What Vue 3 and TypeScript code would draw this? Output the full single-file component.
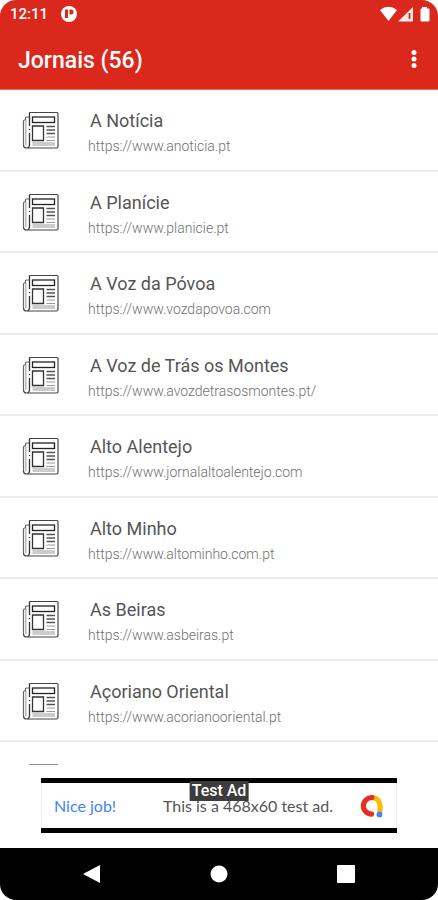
<script setup lang="ts">
interface Newspaper {
  name: string
  url: string
}

const total = 56

const newspapers: Newspaper[] = [
  { name: 'A Notícia', url: 'https://www.anoticia.pt' },
  { name: 'A Planície', url: 'https://www.planicie.pt' },
  { name: 'A Voz da Póvoa', url: 'https://www.vozdapovoa.com' },
  { name: 'A Voz de Trás os Montes', url: 'https://www.avozdetrasosmontes.pt/' },
  { name: 'Alto Alentejo', url: 'https://www.jornalaltoalentejo.com' },
  { name: 'Alto Minho', url: 'https://www.altominho.com.pt' },
  { name: 'As Beiras', url: 'https://www.asbeiras.pt' },
  { name: 'Açoriano Oriental', url: 'https://www.acorianooriental.pt' },
]
</script>

<template>
  <div class="screen">
    <header class="top">
      <div class="status">
        <span class="clock">12:11</span>
        <svg class="badge" viewBox="0 0 16 16" aria-hidden="true">
          <circle cx="8" cy="8" r="8" fill="#fff" />
          <path d="M4 3.500h3v8.500H4z" fill="#da291c" />
          <path d="M8.500 3.500h1.500a2.400 2.400 0 0 1 0 5H8.500z" fill="#da291c" />
        </svg>
        <svg class="signals" viewBox="0 0 50 16" aria-hidden="true">
          <path d="M0 4Q8.500-2.500 17 4L8.500 15z" fill="#fff" />
          <path d="M33 1v14.500H18z" fill="#fff" fill-opacity=".9" />
          <path d="M29.500 7v6" stroke="#da291c" stroke-width="1.800" />
          <path d="M42 1h5v1.500h1.500a1 1 0 0 1 1 1V14.500a1 1 0 0 1-1 1h-7a1 1 0 0 1-1-1V3.500a1 1 0 0 1 1-1H42z" fill="#fff" />
        </svg>
      </div>
      <div class="toolbar">
        <h1>Jornais ({{ total }})</h1>
        <button class="more" type="button" aria-label="Mais opções">
          <svg viewBox="0 0 6 20" aria-hidden="true">
            <circle cx="3" cy="3.500" r="2.500" /><circle cx="3" cy="10" r="2.500" /><circle cx="3" cy="16.500" r="2.500" />
          </svg>
        </button>
      </div>
    </header>

    <svg class="defs" aria-hidden="true">
      <symbol id="newspaper" viewBox="0 0 38 40">
        <path d="M7.500 2.500h27.500q1 0 1 1v33q0 1.500-1.500 1.500H4.500Q1.500 38 1.500 35" fill="none" stroke="#444" stroke-width="1.200" />
        <path d="M1.500 35V11q0-1 1-1h1V8q0-1 1-1h3" fill="none" stroke="#666" stroke-width="1.200" />
        <path d="M3.800 10v25" stroke="#b5b5b5" stroke-width="1.400" />
        <path d="M7.500 2.500V16M7.500 19v1M7.500 23v12q0 2-2 3" fill="none" stroke="#333" stroke-width="1.300" />
        <rect x="10.500" y="7" width="22" height="5.500" fill="none" stroke="#222" stroke-width="1.300" />
        <path d="M10.500 30.500V16h11v14.500z" fill="none" stroke="#333" stroke-width="1.300" />
        <path d="M24.500 16.500h8.500M24.500 20h8.500M24.500 23.500h8.500" stroke="#555" stroke-width="1.300" />
        <path d="M24.500 27h8.500M24.500 30.500h8.500M10.500 33h22.500M10.500 35h22.500" stroke="#999" stroke-width="1.200" />
      </symbol>
    </svg>

    <main class="content">
      <ul class="list">
        <li v-for="paper in newspapers" :key="paper.url">
          <a class="row" :href="paper.url">
            <svg class="icon" aria-hidden="true"><use href="#newspaper" /></svg>
            <span class="text">
              <span class="name">{{ paper.name }}</span>
              <span class="url">{{ paper.url }}</span>
            </span>
          </a>
        </li>
      </ul>
      <div class="peek">
        <svg class="icon" aria-hidden="true"><use href="#newspaper" /></svg>
      </div>
    </main>

    <aside class="ad-area">
      <div class="ad">
        <span class="ad-label">Test Ad</span>
        <span class="ad-cheer">Nice job!</span>
        <span class="ad-copy">This is a 468x60 test ad.</span>
        <svg class="ad-logo" viewBox="0 0 24 24" fill="none" stroke-linecap="round" stroke-width="5.200" aria-hidden="true">
          <path d="M12 3.500A8 8 0 0 1 20 11.500V17" stroke="#fbbc04" />
          <path d="M12 3.500A8.300 8.300 0 0 0 11.500 20.200" stroke="#e52e20" />
          <circle cx="19.500" cy="20.500" r="2.900" fill="#4285f4" />
        </svg>
      </div>
    </aside>

    <nav class="system">
      <button type="button" aria-label="Voltar">
        <svg viewBox="0 0 20 20"><path d="M18 1v18L1 10z" /></svg>
      </button>
      <button type="button" aria-label="Início">
        <svg viewBox="0 0 20 20"><circle cx="10" cy="10" r="8.500" /></svg>
      </button>
      <button type="button" aria-label="Recentes">
        <svg viewBox="0 0 20 20"><rect x="1" y="1" width="18" height="18" rx="1" /></svg>
      </button>
    </nav>
  </div>
</template>

<style>
body {
  margin: 0;
  background: #fff;
}
</style>

<style scoped>
.screen {
  display: flex;
  flex-direction: column;
  min-height: 100vh;
  overflow: hidden;
  border-radius: 16px;
  background: #fff;
  font-family: Roboto, "Liberation Sans", sans-serif;
}

.top {
  box-sizing: border-box;
  height: 90px;
  color: #fff;
  background: #da291c;
  border-bottom: 1px solid #e8675d;
}

.status {
  display: flex;
  align-items: center;
  height: 28px;
  padding: 0 8px 0 10px;
}

.clock {
  font-size: 15px;
  font-weight: 500;
  line-height: 28px;
}

.badge {
  width: 16px;
  height: 16px;
  margin-left: 13px;
}

.signals {
  width: 50px;
  height: 16px;
  margin-left: auto;
}

.toolbar {
  display: flex;
  align-items: center;
  justify-content: space-between;
  height: 62px;
  padding: 0 14px 0 18px;
}

h1 {
  margin: 0;
  padding-top: 3px;
  font-size: 23px;
  font-weight: 500;
  line-height: 28px;
}

button {
  display: grid;
  place-items: center;
  padding: 0;
  border: 0;
  background: none;
}

.more {
  width: 20px;
  height: 40px;
}

.more svg {
  width: 6px;
  height: 20px;
  fill: #fff;
}

.defs {
  position: absolute;
  width: 0;
  height: 0;
}

.content {
  flex: 1;
}

.list {
  display: grid;
  grid-auto-rows: 1fr;
  min-height: 652px;
  margin: 0;
  padding: 0;
  list-style: none;
}

.list li {
  border-bottom: 2px solid #ececec;
}

.row {
  display: flex;
  align-items: flex-start;
  gap: 28px;
  padding: 20px 22px 0;
  text-decoration: none;
}

.icon {
  flex: none;
  width: 38px;
  height: 40px;
}

.text {
  display: flex;
  flex-direction: column;
  gap: 6px;
}

.name {
  padding-left: 2px;
  color: #555;
  font-size: 18px;
  line-height: 22px;
}

.url {
  color: #707070;
  font-size: 14px;
  font-weight: 300;
  line-height: 16px;
}

.peek {
  box-sizing: border-box;
  height: 23px;
  padding: 20px 22px 0;
  overflow: hidden;
  opacity: 0.6;
}

.ad-area {
  padding: 12px 41px 15px;
}

.ad {
  position: relative;
  box-sizing: border-box;
  display: flex;
  align-items: center;
  height: 55px;
  padding: 0 13px;
  border-top: 5px solid #000;
  border-bottom: 5px solid #000;
  box-shadow: inset 1px 0 #eee, inset -1px 0 #eee;
  font-family: Lato, sans-serif;
  font-size: 16px;
}

.ad-label {
  position: absolute;
  top: -2px;
  left: 50%;
  padding: 0 2px;
  transform: translateX(-50%);
  color: #fff;
  background: #3c3c3c;
  font-family: Roboto, sans-serif;
  font-size: 16px;
  font-weight: 500;
  line-height: 20px;
}

.ad-cheer {
  color: #4285f4;
}

.ad-copy {
  margin-left: auto;
  color: #555;
}

.ad-logo {
  width: 24px;
  height: 24px;
  margin-left: 27px;
}

.system {
  display: flex;
  align-items: center;
  justify-content: space-between;
  height: 52px;
  padding: 0 82px;
  background: #000;
}

.system svg {
  width: 20px;
  height: 20px;
  fill: #fff;
}
</style>
